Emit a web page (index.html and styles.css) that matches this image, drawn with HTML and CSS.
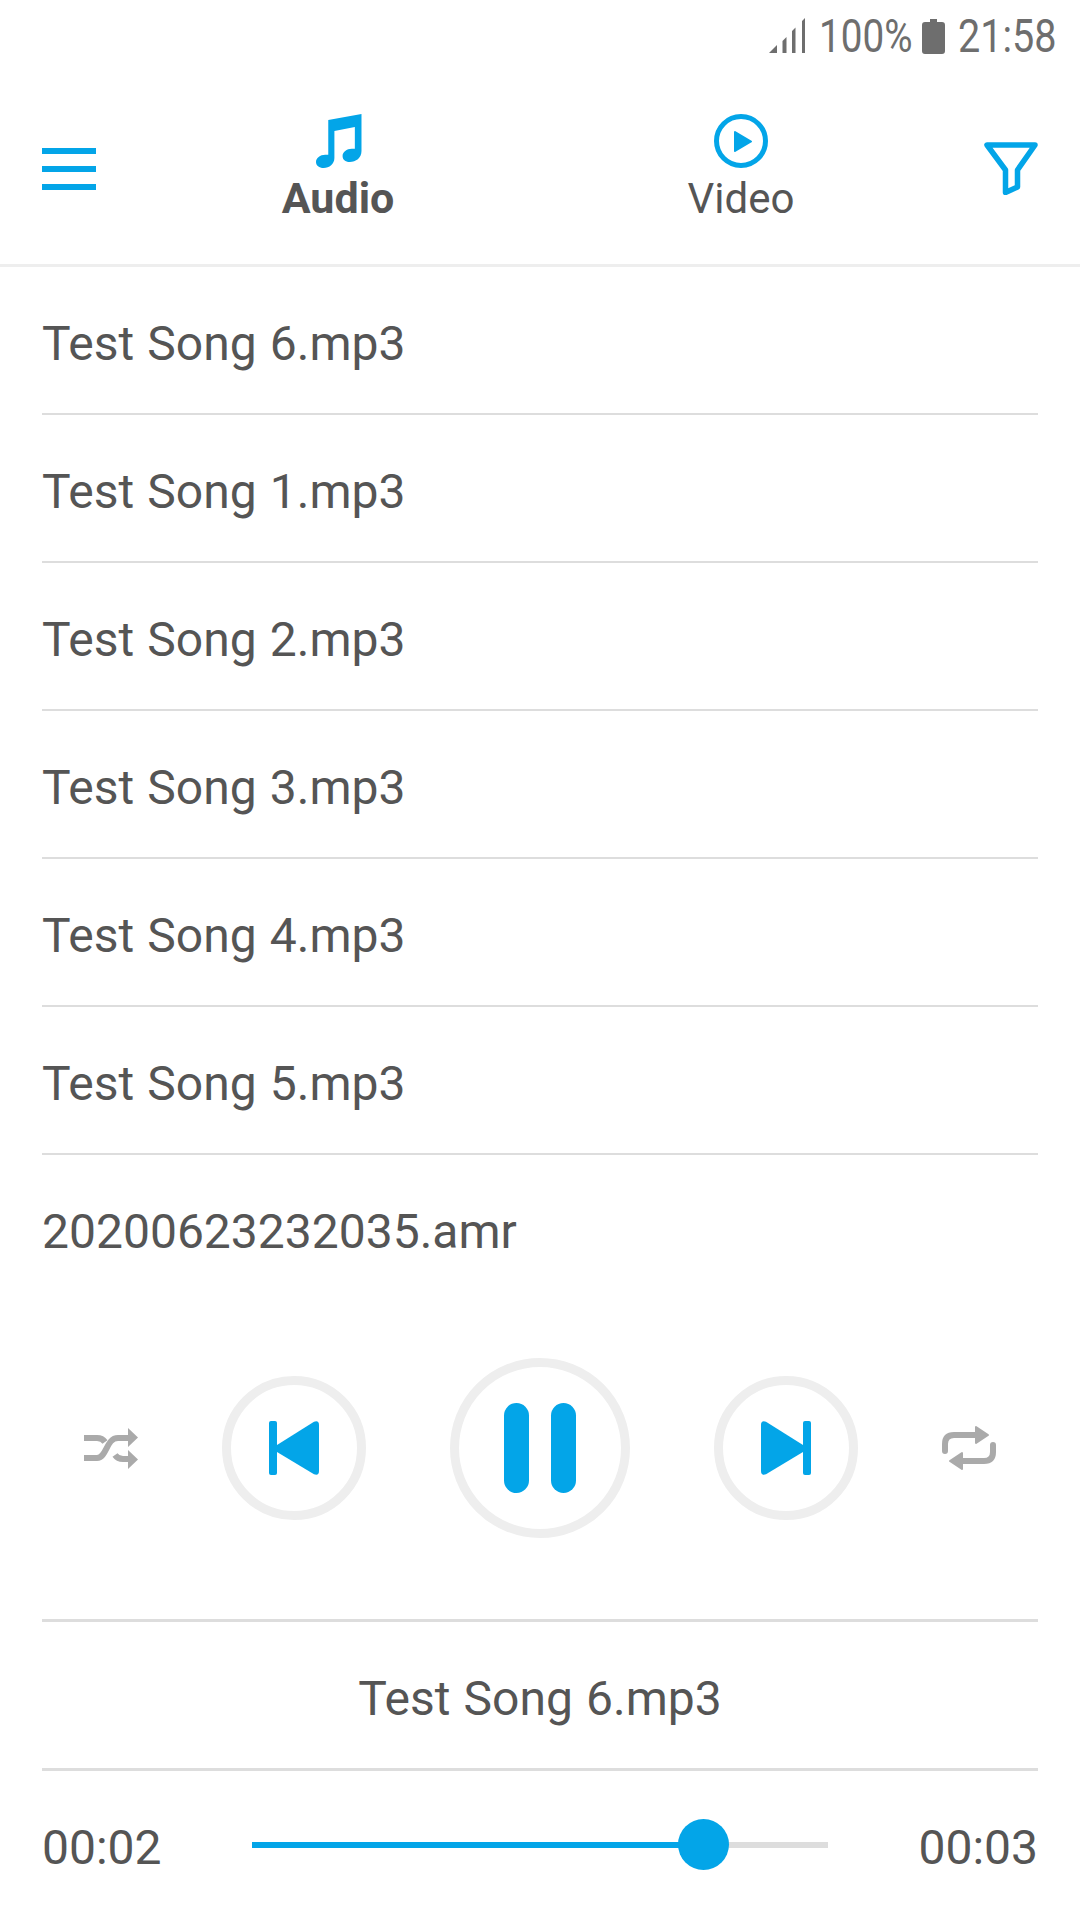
FILE: index.html
```html
<!DOCTYPE html>
<html lang="en">
<head>
    <meta charset="UTF-8">
    <meta name="viewport" content="width=device-width, initial-scale=1.0">
    <title>Music Player</title>
    <link rel="stylesheet" href="styles.css">
</head>
<body>
    <div class="status-bar">
        <svg class="signal" width="36" height="36" viewBox="0 0 36 36">
            <path d="M0 35 L8 27 V35 Z M13.5 35 V23 L17.5 19 V35 Z M23 35 V13 L26.5 9.500 V35 Z M33 35 V3 L36 0 V35 Z"/>
        </svg>
        <span class="status-text status-percent">100%</span>
        <svg class="battery" width="23" height="35" viewBox="0 0 23 35">
            <path d="M8 0 H15 V3 H20 Q23 3 23 6 V32 Q23 35 20 35 H3 Q0 35 0 32 V6 Q0 3 3 3 H8 Z"/>
        </svg>
        <span class="status-text status-time">21:58</span>
    </div>

    <header class="top-bar">
        <div class="menu-icon">
            <span></span>
            <span></span>
            <span></span>
        </div>
        <div class="tab tab-audio">
            <svg width="46" height="54" viewBox="0 0 45 54" preserveAspectRatio="none">
                <path class="fill-blue" d="M12 6 L44.500 0 V37 C44.500 44 39 48 33 48 C28.500 48 26 45.500 26 42 C26 38 30 34.700 35 34.700 H38 V13 L18 17 V44 C18 50 13 54 7.500 54 C3 54 0 51.500 0 48 C0 44 4 40.700 9 40.700 H12 Z"/>
            </svg>
            <span>Audio</span>
        </div>
        <div class="tab tab-video">
            <svg width="54" height="54" viewBox="0 0 54 54">
                <circle class="stroke-blue" cx="27" cy="27" r="24.500" stroke-width="5"/>
                <path class="fill-blue" d="M21 18 L37 27.500 L21 37 Z" stroke="#03a5e8" stroke-width="2" stroke-linejoin="round"/>
            </svg>
            <span>Video</span>
        </div>
        <svg class="filter-icon" width="54" height="53" viewBox="0 0 54 53">
            <path class="stroke-blue" d="M3 3 H51 L33.500 28 V45 L21.500 50.500 V28 Z" stroke-width="5.500" stroke-linejoin="round"/>
        </svg>
    </header>

    <ul class="song-list">
        <li>Test Song 6.mp3</li>
        <li>Test Song 1.mp3</li>
        <li>Test Song 2.mp3</li>
        <li>Test Song 3.mp3</li>
        <li>Test Song 4.mp3</li>
        <li>Test Song 5.mp3</li>
        <li>20200623232035.amr</li>
    </ul>

    <section class="controls">
        <svg class="side-icon" width="54" height="41" viewBox="0 0 54 41">
            <g class="stroke-gray" stroke-width="6">
                <path d="M0 30 H13 C23 30 22 10 34 10 H46"/>
                <path d="M0 10 H13 C17 10 19 11 21 14"/>
                <path d="M31 27 C33 30 36 31 39 31 H46"/>
            </g>
            <path class="fill-gray" d="M44 0 L54 9.500 L44 19 Z M44 22 L54 31.500 L44 41 Z"/>
        </svg>
        <div class="round-btn">
            <svg width="50" height="54" viewBox="0 0 50 54">
                <rect class="fill-blue" width="8" height="54" rx="2"/>
                <path class="fill-blue" d="M8 24 L45 .700 Q50 -1 50 4 V50 Q50 55 45 53.300 L8 31 Z"/>
            </svg>
        </div>
        <div class="round-btn round-btn-big">
            <span class="pause-bar"></span>
            <span class="pause-bar"></span>
        </div>
        <div class="round-btn">
            <svg width="50" height="54" viewBox="0 0 50 54">
                <g transform="matrix(-1 0 0 1 50 0)">
                    <rect class="fill-blue" width="8" height="54" rx="2"/>
                    <path class="fill-blue" d="M8 24 L45 .700 Q50 -1 50 4 V50 Q50 55 45 53.300 L8 31 Z"/>
                </g>
            </svg>
        </div>
        <svg class="side-icon" width="54" height="44" viewBox="0 0 54 44">
            <g>
                <path class="stroke-gray" d="M3 25 V18 C3 12 6 9 12 9 H36" stroke-width="6" stroke-linecap="round"/>
                <path class="fill-gray" d="M34 1 L46 9 L34 17 Z" stroke="#aaa" stroke-width="2" stroke-linejoin="round"/>
            </g>
            <g transform="rotate(180 27 22)">
                <path class="stroke-gray" d="M3 25 V18 C3 12 6 9 12 9 H36" stroke-width="6" stroke-linecap="round"/>
                <path class="fill-gray" d="M34 1 L46 9 L34 17 Z" stroke="#aaa" stroke-width="2" stroke-linejoin="round"/>
            </g>
        </svg>
    </section>

    <div class="now-playing">Test Song 6.mp3</div>

    <div class="progress-row">
        <span class="time">00:02</span>
        <div class="track">
            <div class="track-fill" style="width: 78.800%"></div>
            <div class="thumb"></div>
        </div>
        <span class="time">00:03</span>
    </div>
</body>
</html>
```

FILE: styles.css
```css
body {
    font-family: 'Roboto', 'Liberation Sans', sans-serif;
    margin: 0;
    width: 1080px;
    height: 1920px;
    overflow: hidden;
    background-color: #fff;
    color: #555;
}

svg {
    display: block;
}

.fill-blue {
    fill: #03a5e8;
}

.stroke-blue {
    fill: none;
    stroke: #03a5e8;
}

.fill-gray {
    fill: #aaa;
}

.stroke-gray {
    fill: none;
    stroke: #aaa;
}

/* status bar */
.status-bar {
    height: 72px;
    padding-right: 26px;
    display: flex;
    justify-content: flex-end;
    align-items: center;
    box-sizing: border-box;
    color: #6e6e6e;
}

.signal, .battery {
    fill: #6e6e6e;
}

.status-text {
    font-size: 46px;
    line-height: 72px;
    display: inline-block;
    transform-origin: left center;
    transform: scaleX(0.86);
}

.status-percent {
    width: 93px;
    margin-left: 14px;
    margin-right: 10px;
    transform: scaleX(0.84);
}

.status-time {
    width: 96px;
    margin-left: 13px;
}

/* top bar */
.top-bar {
    height: 192px;
    padding: 0 42px;
    display: flex;
    align-items: flex-start;
    border-bottom: 3px solid #eee;
}

.menu-icon {
    width: 54px;
    height: 42px;
    margin-top: 76px;
    display: flex;
    flex-direction: column;
    justify-content: space-between;
}

.menu-icon span {
    display: block;
    height: 6px;
    background-color: #03a5e8;
}

.tab {
    width: 160px;
    margin-top: 42px;
    display: flex;
    flex-direction: column;
    align-items: center;
    gap: 6px;
    font-size: 42px;
    line-height: 48px;
}

.tab-audio {
    margin-left: 162px;
    font-size: 43px;
    font-weight: 700;
}

.tab-audio svg {
    margin-left: 2px;
}

.tab-video {
    margin-left: 243px;
    gap: 7px;
}

.filter-icon {
    margin-left: auto;
    margin-top: 70px;
}

/* song list */
.song-list {
    list-style: none;
    margin: 0 42px;
    padding: 0;
}

.song-list li {
    height: 146px;
    border-bottom: 2px solid #ddd;
    font-size: 48px;
    line-height: 154px;
    word-spacing: 1.2px;
}

.song-list li:last-child {
    border-bottom: none;
}

/* playback controls */
.controls {
    height: 294px;
    margin: 0 84px 24px;
    display: flex;
    justify-content: space-between;
    align-items: center;
}

.round-btn {
    width: 144px;
    height: 144px;
    box-sizing: border-box;
    border: 9px solid #eee;
    border-radius: 50%;
    display: flex;
    justify-content: center;
    align-items: center;
}

.round-btn-big {
    width: 180px;
    height: 180px;
    gap: 22px;
}

.pause-bar {
    width: 25px;
    height: 90px;
    border-radius: 13px;
    background-color: #03a5e8;
}

/* bottom */
.now-playing {
    margin: 0 42px;
    height: 146px;
    border-top: 3px solid #ddd;
    border-bottom: 3px solid #ddd;
    text-align: center;
    font-size: 48px;
    line-height: 154px;
    word-spacing: 1.2px;
}

.progress-row {
    margin: 0 42px;
    height: 148px;
    display: flex;
    justify-content: space-between;
    align-items: center;
    font-size: 48px;
}

.time {
    padding-top: 5px;
}

.track {
    position: relative;
    width: 576px;
    height: 6px;
    background-color: #ddd;
}

.track-fill {
    height: 100%;
    background-color: #03a5e8;
}

.thumb {
    position: absolute;
    left: 426px;
    top: -23px;
    width: 51px;
    height: 51px;
    border-radius: 50%;
    background-color: #03a5e8;
}
```
